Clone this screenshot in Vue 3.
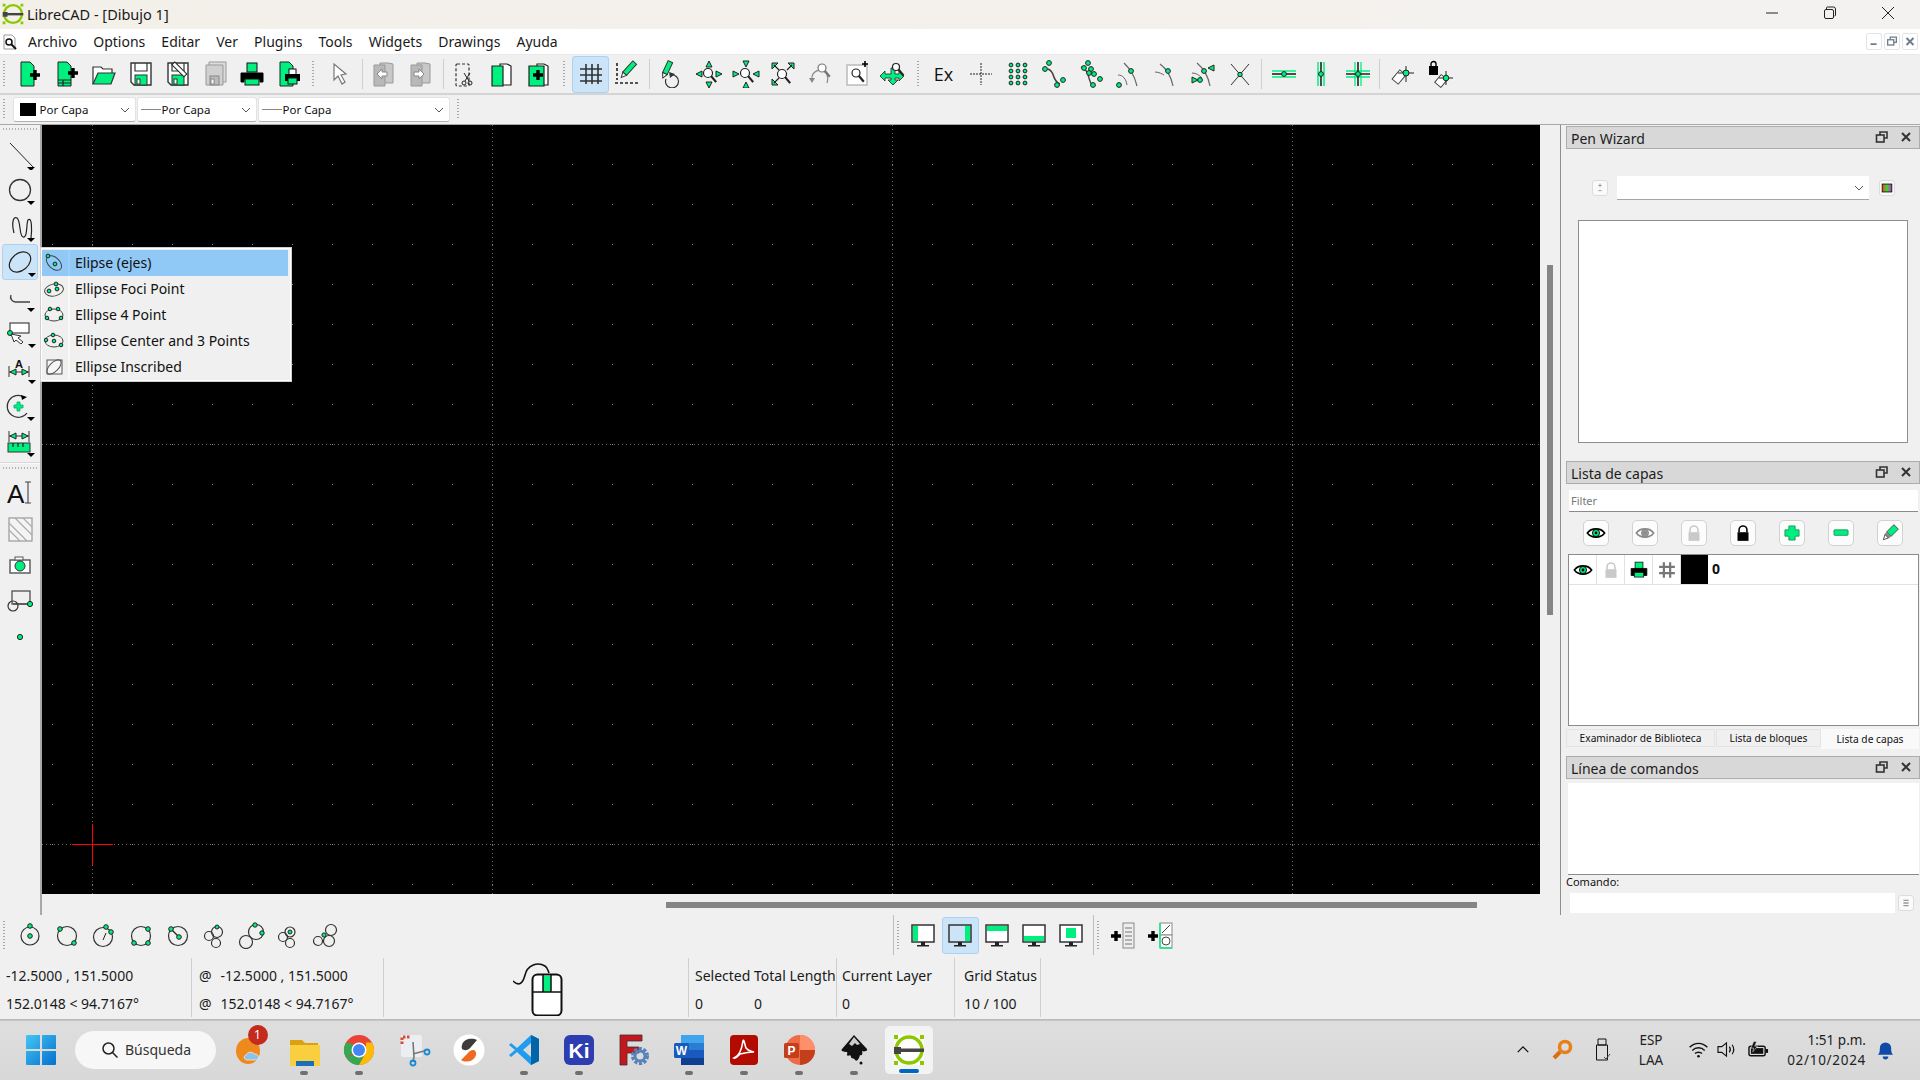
<script setup>
const G = '#00f080';
const dot = (x, y, r = 2.4) => `<circle cx="${x}" cy="${y}" r="${r}" fill="${G}" stroke="#222" stroke-width="1"/>`;
const ln = (d, c = '#222', w = 1.2) => `<path d="${d}" fill="none" stroke="${c}" stroke-width="${w}"/>`;
const fl = (d, f, s = '#222', w = 1) => `<path d="${d}" fill="${f}" stroke="${s}" stroke-width="${w}"/>`;
const circ = (x, y, r, s = '#222', w = 1.2, f = 'none') => `<circle cx="${x}" cy="${y}" r="${r}" fill="${f}" stroke="${s}" stroke-width="${w}"/>`;
const ell = (x, y, rx, ry, rot = 0, s = '#333', w = 1.2) => `<ellipse cx="${x}" cy="${y}" rx="${rx}" ry="${ry}" transform="rotate(${rot} ${x} ${y})" fill="none" stroke="${s}" stroke-width="${w}"/>`;
const rc = (x, y, w, h, f, s = 'none', sw = 1) => `<rect x="${x}" y="${y}" width="${w}" height="${h}" fill="${f}" stroke="${s}" stroke-width="${sw}"/>`;
const plus = (x, y, s = 5, w = 3) => ln(`M${x - s} ${y}h${2 * s}M${x} ${y - s}v${2 * s}`, '#000', w);
const mag = (x, y, r = 4, c = '#222') => circ(x, y, r, c, 1.2, '#fff') + ln(`M${x + r * 0.7} ${y + r * 0.7}l5 6`, c, 2.2);
const tri = (x, y, dir) => {
  const p = { u: `${x - 3},${y + 3} ${x + 3},${y + 3} ${x},${y - 3}`, d: `${x - 3},${y - 3} ${x + 3},${y - 3} ${x},${y + 3}`, l: `${x + 3},${y - 3} ${x + 3},${y + 3} ${x - 3},${y}`, r: `${x - 3},${y - 3} ${x - 3},${y + 3} ${x + 3},${y}` }[dir];
  return `<polygon points="${p}" fill="${G}" stroke="#222" stroke-width="1"/>`;
};
const page = fl('M5 2h9l4 4v20H5z', G);
const floppy = fl('M4 3h20v22H7l-3-3z', '#fff', '#333', 1.4) + rc(8, 15, 12, 10, G, '#333') + rc(10, 19, 3, 5, '#fff', '#333') + ln('M8 3v8h12V3', '#333');
const printer = rc(9, 3, 10, 9, G, '#111') + fl('M3 13h22v9h-3v-3H6v3H3z', '#000', '#000') + rc(7, 19, 14, 6, G, '#111');
const arrowBack = (flip) => fl('M10 3h8l5 1v19H10z', '#c8c8c8', '#999') + fl('M4 5h11v21H4z', '#b8b8b8', '#999') + fl(flip ? 'M17 14l-5-5v3H7v4h5v3z' : 'M7 14l5-5v3h5v4h-5v3z', '#fff', '#888');

const icons = {
  newdoc: page + plus(19, 15, 5, 3.4),
  tpl: page + ln('M5 20h13M5 23h13M10 20v6') + plus(20, 13, 5, 3.4),
  open: fl('M3 24V7h8l2 2h9v4', '#fff', '#333', 1.2) + fl('M3 24l5-11h17l-4 11z', G, '#333', 1.2),
  save: floppy,
  saveas: floppy + `<g transform="translate(15 9) rotate(45)">${rc(-8, -2, 17, 4, '#fff', '#222')}</g>`,
  saveall: fl('M8 2h17v20H8z', '#ddd', '#999') + fl('M5 5h17v20H5z', '#d0d0d0', '#999') + rc(9, 16, 9, 9, '#bbb', '#888') + rc(10, 19, 3, 5, '#fff', '#888'),
  print: printer,
  preview: fl('M5 2h9l4 4v20H5z', G) + rc(14, 9, 7, 6, '#fff', '#111') + rc(10, 14, 15, 7, '#000') + rc(13, 18, 9, 6, G, '#111'),
  select: fl('M8 4l0 16 4-4 4 8 3-2-4-7 5-1z', '#fff', '#777', 1.2),
  undo: arrowBack(false),
  redo: arrowBack(true),
  cut: `<rect x="5" y="4" width="13" height="22" rx="1" fill="none" stroke="#333" stroke-width="1.2" stroke-dasharray="3 2"/>` + ln('M13 13l5 8M19 13l-5 8', '#222', 1) + circ(13, 23, 2, '#222', 1) + circ(19, 23, 2, '#222', 1),
  copy: fl('M12 4h7l4 2v19H12z', '#fff', '#222', 1.2) + fl('M4 6h11l0 20H4z', G, '#222', 1.2),
  paste: fl('M12 4h7l4 2v19H12z', '#fff', '#222', 1.2) + fl('M4 6h11l4 0v20H4z', G, '#222', 1.2) + plus(13, 15, 5, 3.4),
  grid: ln('M9 4v20M15 4v20M21 4v20M3 9h22M3 15h22M3 21h22', '#333', 1.6),
  draft: `<path d="M3 3v17M1 23h24" stroke="#222" stroke-width="1.6" stroke-dasharray="3 2" fill="none"/>` + `<g transform="translate(14 10) rotate(42)">${rc(-2.5, -10, 5, 15, G, '#333')}<polygon points="-2.5,5 2.5,5 0,10" fill="#fff" stroke="#333"/></g>`,
  redraw: `<g transform="translate(9 9) rotate(25)">${rc(-2.5, -8, 5, 13, G, '#333')}<polygon points="-2.5,5 2.5,5 0,10" fill="#fff" stroke="#333"/></g>` + ln('M13 15a6.5 6.5 0 1 1 -5 4', '#333', 1.2) + '<polygon points="11,12 17,14 12,18" fill="#333"/>',
  zoomin: tri(14, 4, 'u') + tri(14, 25, 'd') + tri(4, 14, 'l') + tri(24, 14, 'r') + mag(13, 13, 4.5),
  zoomout: tri(14, 4, 'd') + tri(14, 25, 'u') + tri(4, 14, 'r') + tri(24, 14, 'l') + mag(13, 13, 4.5),
  zoomauto: fl('M3 3h6l-6 6z', G) + fl('M25 3h-6l6 6z', G) + fl('M3 25h6l-6-6z', G) + ln('M5 5l5 5M23 5l-5 5M5 23l5-5') + mag(13, 14, 4.5),
  zoomprev: ln('M6 19a8 8 0 0 1 14-6c2 3 2 7 1 10', '#888', 1.2) + '<polygon points="3,18 9,18 6,23" fill="#888"/>' + mag(16, 8, 4, '#777'),
  zoomwin: rc(4, 5, 20, 20, '#fff', '#bbb', 1.5) + plus(22, 4, 3, 1.6) + mag(13, 13, 4),
  pan: fl('M11 8h4v6h4v-3l5 5-5 5v-3h-4v2h3l-5 5-5-5h3v-2H5v3l-5-5 5-5v3h6z', G, '#333', 0.9) + mag(16, 7, 3.5),
  free: `<path d="M14 3v22M3 14h22" stroke="#222" stroke-width="1" stroke-dasharray="2 1" fill="none"/>`,
  gridpt: [7, 14, 21].map((x) => [5, 11, 17, 23].map((y) => dot(x, y, 1.9)).join('')).join(''),
  end: ln('M7 9c8 3 3 11 12 15', '#444', 1.6) + dot(8, 3) + dot(4, 9) + dot(22, 20) + dot(16, 25),
  oncurve: ln('M3 7c10 4 6 14 12 19', '#444', 1.4) + dot(6, 8) + dot(10, 3) + dot(13, 9) + dot(11, 13) + dot(16, 14) + dot(22, 19) + dot(15, 25),
  center: ln('M9 3c6 6 10 11 13 23', '#666', 1.2) + dot(16, 11) + dot(4, 25) + ln('M3 15c5 0 8 4 9 10', '#666', 1),
  middle: ln('M8 4c7 5 11 12 13 22', '#666', 1.2) + ln('M3 12c4 0 7 2 9 3', '#666', 1) + dot(16, 11),
  dist: ln('M8 3c6 5 11 12 13 23', '#666', 1.2) + ln('M3 13c4 0 7 2 10 5', '#666', 1) + dot(15, 11) + dot(11, 20) + tri(22, 8, 'l') + tri(6, 20, 'r'),
  cross: ln('M5 4l18 21M23 4L5 25', '#333', 1) + dot(14, 14.5, 2.2),
  hrest: ln('M2 11h24M2 17h24', G, 1.5) + ln('M2 14h24', '#222', 1.6) + dot(14, 14, 2.4),
  vrest: ln('M11 2v24M17 2v24', G, 1.5) + ln('M14 2v24', '#222', 1.6) + dot(14, 14, 2.4),
  bothrest: ln('M2 11h24M2 17h24M11 2v24M17 2v24', G, 1.3) + ln('M2 14h24M14 2v24', '#222', 1.6) + dot(14, 14, 2.4),
  relzero: `<g transform="translate(11 17) rotate(40)">${rc(-4, -6, 8, 12, '#fff', '#444')}</g>` + ln('M18 6v16M10 13h16', '#222', 1) + dot(18, 13, 3),
  lockzero: rc(4, 6, 9, 9, '#000') + ln('M6 6V4a2.5 2.5 0 0 1 5 0v2', '#000', 1.4) + `<g transform="translate(16 21) rotate(40)">${rc(-4, -5, 8, 10, '#fff', '#444')}</g>` + ln('M21 11v14M14 18h14', '#222', 1) + dot(21, 18, 2.8),

  lLine: ln('M4 3l24 25', '#222', 1) + '<polygon points="21,27 29,27 25,31" fill="#000"/>',
  lCircle: circ(14, 14, 10.5, '#333', 1.3) + '<polygon points="21,25 29,25 25,29" fill="#000"/>',
  lSpline: ln('M8 21C5 9 8 4 11 6c4 3 2 18 6 19 5 1 3-14 5-17 4-4 4 10 3 18', '#222', 1.2) + '<polygon points="21,26 29,26 25,30" fill="#000"/>',
  lEllipse: ell(14, 14, 12, 8.5, -40, '#222', 1.2) + '<polygon points="22,25 30,25 26,29" fill="#000"/>',
  lPoly: ln('M5 11a5 5 0 0 0 5 7h14', '#444', 1.4) + '<polygon points="21,24 29,24 25,28" fill="#000"/>',
  lSelect: rc(4, 3, 19, 10, '#fff', '#444', 1.2) + dot(4, 13, 2.5) + fl('M5 14l3 8 2-2 5 4 2-2-5-4 3-2z', '#fff', '#333') + '<polygon points="22,24 30,24 26,28" fill="#000"/>',
  lDim: ln('M3 10v11M23 10v11M3 16h20', '#333', 1) + tri(7, 16, 'l') + tri(19, 16, 'r') + `<text x="13" y="12" font-size="11" font-weight="700" text-anchor="middle" font-family="Liberation Sans" fill="#111">A</text>` + '<polygon points="22,24 30,24 26,28" fill="#000"/>',
  lModify: ln('M21 21A11 11 0 1 1 18 5', '#333', 1.2) + '<polygon points="15,3 21,5 16,8" fill="#000"/>' + fl('M11 10h3v3h3v3h-3v3h-3v-3H8v-3h3z', G, '#0a7', 0.8) + '<polygon points="21,25 29,25 25,29" fill="#000"/>',
  lMeasure: ln('M3 3v11M23 3v11M3 8h20', '#333', 1) + tri(7, 8, 'l') + tri(19, 8, 'r') + rc(2, 15, 22, 9, G, '#333') + ln('M7 15v4M12 15v4M17 15v4', '#222', 1.2) + '<polygon points="21,25 29,25 25,29" fill="#000"/>',
  lText: `<text x="1" y="24" font-size="26" font-family="Liberation Sans" fill="#111">A</text>` + ln('M19 3h6M22 3v21M19 24h6', '#444', 1.1),
  lHatch: rc(3, 3, 23, 23, '#f4f4f4', '#999', 1.2) + ln('M3 8l18 18M3 15l11 11M9 3l17 17M17 3l9 9', '#aaa', 1.1),
  lImage: rc(4, 9, 20, 13, '#fff', '#555', 1.4) + rc(9, 6, 8, 3, '#fff', '#555') + circ(14, 15, 5, '#333', 1, G),
  lInsert: rc(6, 4, 18, 13, 'none', '#444', 1.2) + circ(7, 19, 5, '#333', 1.2) + ln('M7 17h17', '#444') + dot(24, 17, 2.6),
  lPoint: dot(14, 14, 2.6),

  mAxes: ell(10, 10, 9, 5.5, 42, '#444', 1) + dot(4, 3, 1.9) + dot(11, 11, 1.9),
  mFoci: ell(10, 11, 9.5, 6, -12, '#444', 1) + dot(5, 12, 1.9) + dot(12, 5, 1.9) + dot(13, 10, 1.9),
  m4: ell(10, 10, 9, 6, 0, '#444', 1) + dot(6, 4, 1.8) + dot(14, 4, 1.8) + dot(3, 13, 1.8) + dot(17, 13, 1.8),
  mC3: ell(10, 10, 9, 6, 0, '#444', 1) + dot(9, 4, 1.8) + dot(2, 9, 1.8) + dot(10, 10, 1.8) + dot(17, 14, 1.8),
  mIn: rc(3, 3, 15, 14, '#f6f6f6', '#555', 1) + ell(10, 10, 9, 4.5, -45, '#555', 1),

  cCR: circ(14, 15, 9, '#333') + dot(14, 15, 2.3) + dot(14, 5, 2.3),
  c2P: circ(14, 15, 9.5, '#333') + dot(7, 8, 2.3) + dot(21, 22, 2.3),
  c2PR: circ(13, 16, 9.5, '#333') + fl('M13 19l3-7', 'none') + dot(16, 6, 2.3) + dot(21, 11, 2.3),
  c3P: circ(14, 15, 9.5, '#333') + dot(21, 8, 2.3) + dot(7, 22, 2.3) + dot(21, 22, 2.3),
  cCP: circ(14, 15, 9.5, '#333') + ln('M7 8l8 8') + dot(7, 8, 2.3) + dot(15, 16, 2.3),
  cT1: circ(8, 15, 4.5, '#333') + circ(15, 22, 4.5, '#333') + circ(16, 11, 5.5, '#333') + dot(16, 6, 2),
  cT2: circ(8, 21, 6.5, '#333') + circ(18, 11, 7.5, '#333') + dot(17, 4, 2.2) + dot(24, 12, 2.2),
  cT3: circ(8, 16, 4.5, '#333') + circ(15, 22, 4.5, '#333') + circ(15, 11, 5, '#333') + dot(15, 11, 2),
  cT4: circ(6, 20, 4.5, '#333') + circ(17, 20, 5.5, '#333') + circ(19, 9, 5.5, '#333') + dot(12, 14, 2.1),

  scL: rc(3, 4, 22, 17, '#fff', '#333', 1.5) + rc(4, 5, 5, 15, G) + rc(12, 21, 4, 3, '#222') + rc(8, 24, 12, 1.5, '#222'),
  scR: rc(3, 4, 22, 17, '#fff0', '#333', 1.5) + rc(19, 5, 5, 15, G) + rc(12, 21, 4, 3, '#222') + rc(8, 24, 12, 1.5, '#222'),
  scT: rc(3, 4, 22, 17, '#fff', '#333', 1.5) + rc(4, 5, 20, 5, G) + rc(12, 21, 4, 3, '#222') + rc(8, 24, 12, 1.5, '#222'),
  scB: rc(3, 4, 22, 17, '#fff', '#333', 1.5) + rc(4, 15, 20, 5, G) + rc(12, 21, 4, 3, '#222') + rc(8, 24, 12, 1.5, '#222'),
  scF: rc(3, 4, 22, 17, '#fff', '#333', 1.5) + rc(9, 7, 10, 10, G) + rc(12, 21, 4, 3, '#222') + rc(8, 24, 12, 1.5, '#222'),
  addList: plus(7, 15, 5, 3.4) + rc(14, 2, 11, 25, '#eee', '#888') + ln('M16 7h7M16 11h7M16 15h7M16 19h7M16 23h7', '#777', 1),
  addTool: plus(7, 15, 5, 3.4) + rc(14, 2, 12, 12, '#fff', '#888') + ln('M16 12l8-8', '#444', 1) + rc(14, 14, 12, 13, '#fff', '#888') + circ(20, 20, 4, '#444', 1) + ln('M14 2v25', G, 1.4) + ln('M14 27h12', G, 1.4),
};

const mainTools = ['g1', 'newdoc', 'tpl', 'open', 'save', 'saveas', 'saveall', 'print', 'preview', 'g2', 'select', '|', 'undo', 'redo', '|', 'cut', 'copy', 'paste', 'g3', 'grid', 'draft', '|', 'redraw', 'zoomin', 'zoomout', 'zoomauto', 'zoomprev', 'zoomwin', 'pan', 'g4', 'ex', 'free', 'gridpt', 'end', 'oncurve', 'center', 'middle', 'dist', 'cross', '|', 'hrest', 'vrest', 'bothrest', '|', 'relzero', 'lockzero'];
const leftTop = ['lLine', 'lCircle', 'lSpline', 'lEllipse', 'lPoly', 'lSelect', 'lDim', 'lModify', 'lMeasure'];
const leftBottom = ['lText', 'lHatch', 'lImage', 'lInsert', 'lPoint'];
const circleTools = ['cCR', 'c2P', 'c2PR', 'c3P', 'cCP', 'cT1', 'cT2', 'cT3', 'cT4'];
const screenTools = ['scL', 'scR', 'scT', 'scB', 'scF'];
const menus = ['Archivo', 'Options', 'Editar', 'Ver', 'Plugins', 'Tools', 'Widgets', 'Drawings', 'Ayuda'];
const combos = [
  { label: 'Por Capa', kind: 'color', w: 'c1' },
  { label: 'Por Capa', kind: 'line', w: 'c2' },
  { label: 'Por Capa', kind: 'line', w: 'c3' },
];
const popup = [
  { icon: 'mAxes', label: 'Elipse (ejes)', active: true },
  { icon: 'mFoci', label: 'Ellipse Foci Point' },
  { icon: 'm4', label: 'Ellipse 4 Point' },
  { icon: 'mC3', label: 'Ellipse Center and 3 Points' },
  { icon: 'mIn', label: 'Ellipse Inscribed' },
];

const eye = (c = '#000', o = G) => `<path d="M3 14c5-7 17-7 22 0c-5 7-17 7-22 0z" fill="#fff" stroke="${c}" stroke-width="2"/><circle cx="14" cy="14" r="4.5" fill="${o}" stroke="${c}" stroke-width="1.2"/><circle cx="14" cy="14" r="1.8" fill="${c}"/>`;
const lock = (c) => `<path d="M9 13V10a5 5 0 0 1 10 0v3" fill="none" stroke="${c}" stroke-width="2"/><rect x="7" y="13" width="14" height="11" fill="${c}"/>`;
const layerBtns = [
  eye(),
  eye('#888', '#999'),
  lock('#c9c9c9'),
  lock('#000'),
  fl('M10 5h8v5h5v8h-5v5h-8v-5H5v-8h5z', G, '#0a8a50', 1),
  `<rect x="5" y="10" width="18" height="7" rx="1" fill="${G}" stroke="#0a8a50"/>`,
  `<g transform="rotate(45 14 14)"><rect x="10" y="3" width="8" height="13" fill="${G}" stroke="#333"/><rect x="10" y="16" width="8" height="4" fill="#888"/><path d="M11 20h6l-3 6z" fill="#fff" stroke="#333"/></g>`,
];
const layerRow = [
  eye(),
  lock('#c9c9c9'),
  rc(9, 4, 10, 8, G, '#111') + fl('M4 12h20v9H4z', '#000', '#000') + rc(8, 17, 12, 6, G, '#111'),
  ln('M10 4v20M18 4v20M4 10h20M4 18h20', '#777', 2.8),
];
const rowClass = ['c-eye', 'c-lock', 'c-print', 'c-grid'];

const TB = '#d9d9d9';
const logoMark = `<path d="M1 1h4v4H1zM27 1h4v4h-4zM1 27h4v4H1zM27 27h4v4h-4z" fill="#8cc800"/><circle cx="16" cy="16" r="13" fill="none" stroke="#8cc800" stroke-width="3.400"/><rect x="1" y="13" width="7" height="7" fill="#444"/><rect x="5" y="14.500" width="26" height="3.500" fill="#444"/>`;
const apps = [
  { c: 'weather', svg: `<ellipse cx="15" cy="17" rx="12" ry="13" fill="#ee8a1d"/><path d="M14 26c-3 0-4-4-1-5 1-3 7-4 8-1 4-1 7 5 2 6z" fill="#8fc1ea" stroke="#fff" stroke-width=".6"/>` },
  { c: 'folder', line: 1, svg: `<path d="M2 6h12l3 3h13v6H2z" fill="#dca010"/><path d="M2 11h30v21H2z" fill="#f9cf3f"/><path d="M8 27h18v5H8z" fill="#1970b8"/>` },
  { c: 'chrome', line: 1, svg: `<circle cx="16" cy="16" r="15" fill="#ea4335"/><path d="M16 16L3 23.5A15 15 0 0 1 3 8.5L9 10z" fill="#34a853"/><path d="M3 23A15 15 0 0 0 16 31l7-14z" fill="#34a853"/><path d="M29 8.5A15 15 0 0 1 16 31l7-13 0-9.500z" fill="#fbbc05"/><circle cx="16" cy="16" r="7.500" fill="#fff"/><circle cx="16" cy="16" r="6" fill="#4285f4"/>` },
  { c: 'snip', svg: `<rect x="3" y="1" width="21" height="22" rx="2" fill="#eceff2"/><path d="M4 10V3h8" fill="none" stroke="#d94a33" stroke-width="3" stroke-dasharray="2.500 1.500"/><path d="M15 8l1 15 -1 5M15 20l11-3" fill="none" stroke="#777" stroke-width="1.600"/><circle cx="15" cy="29" r="2.500" fill="none" stroke="#1b8ad6" stroke-width="1.800"/><circle cx="29" cy="18" r="2.500" fill="none" stroke="#1b8ad6" stroke-width="1.800"/>` },
  { c: 'slack', svg: `<circle cx="16" cy="16" r="15.500" fill="#fff"/><path d="M24 6c-4-2-13-2-15 5-2 6 5 7 9 2z" fill="#3c3c3c"/><path d="M8 26c4 3 13 2 15-5 1-5-4-7-8-2z" fill="#ee6a21"/>` },
  { c: 'vscode', line: 1, svg: `<path d="M23 1l8 4v22l-8 4L9 18 3 23l-2-2 6-5-6-5 2-2 6 5z" fill="#1f9cf0"/><path d="M23 1v30l8-4V5z" fill="#0065a9"/><path d="M23 9l-8 7 8 7z" fill="${TB}"/>` },
  { c: 'ki', line: 1, svg: `<rect x="1" y="1" width="30" height="30" rx="6" fill="#2d3eb0"/><text x="16" y="24" text-anchor="middle" font-family="Liberation Sans" font-weight="700" font-size="21" fill="#fff">Ki</text>` },
  { c: 'fgear', svg: `<path d="M2 1h22v6H9v6h12v6H9v12H2z" fill="#c4161c" stroke="#333" stroke-width=".8"/><circle cx="22" cy="22" r="7" fill="none" stroke="#5683b9" stroke-width="4" stroke-dasharray="3 1.500"/><circle cx="22" cy="22" r="5" fill="none" stroke="#5683b9" stroke-width="3"/>` },
  { c: 'word', line: 1, svg: `<rect x="8" y="1" width="23" height="30" rx="2" fill="#2b7cd3"/><rect x="8" y="1" width="23" height="8" fill="#41a5ee"/><rect x="8" y="16" width="23" height="8" fill="#185abd"/><rect x="8" y="24" width="23" height="7" fill="#103f91"/><rect x="1" y="9" width="15" height="15" rx="1.500" fill="#185abd"/><text x="8.500" y="21" text-anchor="middle" font-family="Liberation Sans" font-weight="700" font-size="12" fill="#fff">W</text>` },
  { c: 'acrobat', line: 1, svg: `<rect x="2" y="1" width="28" height="30" rx="4" fill="#b30b00"/><path d="M6 24c5-2 8-10 9-17 1-3 2 5 3 7 2 3 5 3 8 4-5 0-10 1-14 2-2 2-4 5-6 4z" fill="none" stroke="#fff" stroke-width="1.600"/>` },
  { c: 'ppt', line: 1, svg: `<circle cx="17" cy="16" r="15" fill="#ed6c47"/><path d="M17 16h15a15 15 0 0 1-15 15z" fill="#c43e1c"/><path d="M17 1a15 15 0 0 1 15 15H17z" fill="#ff8f6b"/><rect x="1" y="9" width="15" height="15" rx="1.500" fill="#c43e1c"/><text x="8.500" y="21" text-anchor="middle" font-family="Liberation Sans" font-weight="700" font-size="12" fill="#fff">P</text>` },
  { c: 'inkscape', line: 1, svg: `<path d="M16 1L29 15c1 2-3 3-5 2 1 3 0 5-2 4-1 4-3 7-5 5 0-2-4-1-4-3 0-2-2-2-3-1-2-1 0-3-1-4-3 0-7-1-5-3z" fill="#111"/><path d="M16 3l6 7-3 1-2-2-3 3-3-2z" fill="#ccc"/><circle cx="23" cy="29" r="1.500" fill="#111"/>` },
  { c: 'librecad', active: true, svg: `<rect x="1" y="1" width="30" height="30" fill="#fff"/>` + logoMark },
];
</script>

<template>
  <div class="app">
    <header class="titlebar">
      <svg class="logo" viewBox="0 0 32 32" v-html="logoMark"></svg>
      <span class="title-text">LibreCAD - [Dibujo 1]</span>
      <div class="winctl">
        <svg viewBox="0 0 14 14" class="wc"><path d="M1 7h12" stroke="#222" fill="none" /></svg>
        <svg viewBox="0 0 14 14" class="wc"><path d="M3.500 3V2a1 1 0 0 1 1-1h6a2 2 0 0 1 2 2v6a1 1 0 0 1-1 1" stroke="#222" fill="none"/><rect x="1.500" y="3.500" width="9" height="9" rx="1.500" stroke="#222" fill="none"/></svg>
        <svg viewBox="0 0 14 14" class="wc"><path d="M1 1l12 12M13 1L1 13" stroke="#222" fill="none"/></svg>
      </div>
    </header>

    <nav class="menubar">
      <svg class="doc-ico" viewBox="0 0 18 18"><path d="M3 2h8l3 3v11H3z" fill="#fff" stroke="#999"/><circle cx="8" cy="9" r="3" fill="#fff" stroke="#111" stroke-width="1.500"/><path d="M10 11l5 5" stroke="#111" stroke-width="2"/></svg>
      <span v-for="m in menus" :key="m" class="menu-item">{{ m }}</span>
      <div class="mdi">
        <span class="mdi-btn"><svg viewBox="0 0 16 16"><path d="M4 11h7" stroke="#6e7c8c" stroke-width="2"/></svg></span>
        <span class="mdi-btn"><svg viewBox="0 0 16 16"><path d="M6 5V3h7v6h-3" fill="none" stroke="#6e7c8c" stroke-width="1.500"/><rect x="3" y="6" width="7" height="6" fill="none" stroke="#6e7c8c" stroke-width="1.500"/></svg></span>
        <span class="mdi-btn"><svg viewBox="0 0 16 16"><path d="M4 4l8 8M12 4l-8 8" stroke="#6e7c8c" stroke-width="2.200"/></svg></span>
      </div>
    </nav>

    <div class="toolbar tb-main">
      <template v-for="(t, i) in mainTools" :key="i">
        <span v-if="t === '|'" class="sep"></span>
        <span v-else-if="t[0] === 'g' && t.length === 2" class="grip" :class="t"></span>
        <span v-else-if="t === 'ex'" class="tbtn ex">Ex</span>
        <span v-else class="tbtn" :class="{ on: t === 'grid' }"><svg class="ic" viewBox="0 0 28 28" v-html="icons[t]"></svg></span>
      </template>
    </div>

    <div class="toolbar tb-pen">
      <span class="grip g1"></span>
      <div v-for="(c, i) in combos" :key="i" class="combo" :class="c.w">
        <span v-if="c.kind === 'color'" class="swatch"></span>
        <span v-else class="dash"></span>
        <span class="combo-text">{{ c.label }}</span>
        <svg class="chev" viewBox="0 0 10 6"><path d="M1 1l4 4 4-4" fill="none" stroke="#555" /></svg>
      </div>
      <span class="grip g5"></span>
    </div>

    <main class="workspace">
      <aside class="lefttools">
        <span class="hgrip"></span>
        <span v-for="t in leftTop" :key="t" class="lbtn" :class="{ on: t === 'lEllipse' }"><svg class="lic" viewBox="-2 -2 32 32" v-html="icons[t]"></svg></span>
        <span class="lsep"></span>
        <span class="hgrip"></span>
        <span v-for="t in leftBottom" :key="t" class="lbtn"><svg class="lic" viewBox="-2 -2 32 32" v-html="icons[t]"></svg></span>
      </aside>

      <section class="center">
        <div class="center-top">
          <svg class="canvas" viewBox="0 0 1498 769" width="1498" height="769">
            <defs>
              <pattern id="griddots" x="10" y="39" width="40" height="40" patternUnits="userSpaceOnUse">
                <rect x="0" y="0" width="1" height="1" fill="#8a8a8a" />
              </pattern>
            </defs>
            <rect width="1498" height="769" fill="#000" />
            <rect width="1498" height="769" fill="url(#griddots)" />
            <g stroke="#6a6a6a" stroke-dasharray="1 3" fill="none">
              <path d="M50.500 0V769M450.500 0V769M850.500 0V769M1250.500 0V769" />
              <path d="M0 319.500H1498M0 719.500H1498" />
            </g>
            <path d="M30 719.500H71M50.500 699V740" stroke="#f00" fill="none" />
          </svg>
          <div class="vscroll"><span class="vthumb"></span></div>
        </div>
        <div class="hscroll"><span class="hthumb"></span></div>
      </section>

      <aside class="docks">
        <section class="dock d-pen">
          <div class="dock-title"><span>Pen Wizard</span><svg class="dt" viewBox="0 0 36 16"><path d="M6 5V2h7v6h-3" fill="none" stroke="#333" stroke-width="1.600"/><rect x="2.500" y="5" width="7.500" height="7" fill="none" stroke="#333" stroke-width="1.600"/><path d="M28 3l8 8M36 3l-8 8" stroke="#333" stroke-width="2"/></svg></div>
          <div class="pen-row">
            <span class="mini"><svg viewBox="0 0 16 16"><path d="M8 3v4M6 5h4M6 11h4" stroke="#999"/></svg></span>
            <div class="pen-combo"><svg class="chev" viewBox="0 0 10 6"><path d="M1 1l4 4 4-4" fill="none" stroke="#555" /></svg></div>
            <span class="mini"><svg viewBox="0 0 16 16"><defs><linearGradient id="rb" x1="0" x2="1"><stop offset="0" stop-color="#ff3b20"/><stop offset=".5" stop-color="#30e030"/><stop offset="1" stop-color="#d020e0"/></linearGradient></defs><rect x="2.500" y="3.500" width="11" height="9" fill="url(#rb)" stroke="#111"/></svg></span>
          </div>
          <div class="pen-preview"></div>
        </section>

        <section class="dock d-layers">
          <div class="dock-title"><span>Lista de capas</span><svg class="dt" viewBox="0 0 36 16"><path d="M6 5V2h7v6h-3" fill="none" stroke="#333" stroke-width="1.600"/><rect x="2.500" y="5" width="7.500" height="7" fill="none" stroke="#333" stroke-width="1.600"/><path d="M28 3l8 8M36 3l-8 8" stroke="#333" stroke-width="2"/></svg></div>
          <div class="filter">Filter</div>
          <div class="layer-btns">
            <span v-for="(b, i) in layerBtns" :key="i" class="lay-btn"><svg viewBox="0 0 28 28" v-html="b"></svg></span>
          </div>
          <div class="layer-table">
            <div class="layer-row">
              <span v-for="(b, i) in layerRow" :key="i" class="cell" :class="rowClass[i]"><svg viewBox="0 0 28 28" v-html="b"></svg></span>
              <span class="cell-color"></span>
              <span class="layer-name">0</span>
            </div>
          </div>
          <div class="tabs">
            <span class="tab t1">Examinador de Biblioteca</span>
            <span class="tab t2">Lista de bloques</span>
            <span class="tab t3 active">Lista de capas</span>
          </div>
        </section>

        <section class="dock d-cmd">
          <div class="dock-title"><span>Línea de comandos</span><svg class="dt" viewBox="0 0 36 16"><path d="M6 5V2h7v6h-3" fill="none" stroke="#333" stroke-width="1.600"/><rect x="2.500" y="5" width="7.500" height="7" fill="none" stroke="#333" stroke-width="1.600"/><path d="M28 3l8 8M36 3l-8 8" stroke="#333" stroke-width="2"/></svg></div>
          <div class="cmd-out"></div>
          <div class="cmd-label">Comando:</div>
          <div class="cmd-row">
            <div class="cmd-in"></div>
            <span class="mini small"><svg viewBox="0 0 16 16"><path d="M5 5h6M5 8h6M5 11h6" stroke="#999" stroke-width="1.500"/></svg></span>
          </div>
        </section>
      </aside>

      <div class="popup">
        <div v-for="p in popup" :key="p.label" class="pop-item" :class="{ active: p.active }">
          <span class="pop-ico"><svg viewBox="0 0 20 20" v-html="icons[p.icon]"></svg></span>
          <span class="pop-label">{{ p.label }}</span>
        </div>
      </div>
    </main>

    <div class="bottomtools">
      <div class="bt-left">
        <span class="grip g1"></span>
        <span v-for="t in circleTools" :key="t" class="tbtn"><svg class="ic" viewBox="0 0 28 28" v-html="icons[t]"></svg></span>
      </div>
      <div class="bt-screen">
        <span class="grip g6"></span>
        <span v-for="t in screenTools" :key="t" class="tbtn" :class="{ on: t === 'scR' }"><svg class="ic" viewBox="0 0 28 28" v-html="icons[t]"></svg></span>
      </div>
      <div class="bt-add">
        <span class="grip g6"></span>
        <span class="tbtn"><svg class="ic" viewBox="0 0 28 28" v-html="icons.addList"></svg></span>
        <span class="tbtn"><svg class="ic" viewBox="0 0 28 28" v-html="icons.addTool"></svg></span>
      </div>
    </div>

    <footer class="statusbar">
      <div class="st st1"><span>-12.5000 , 151.5000</span><span>152.0148 &lt; 94.7167°</span></div>
      <div class="st st2">
        <div class="at-row"><span class="at">@</span><span>-12.5000 , 151.5000</span></div>
        <div class="at-row"><span class="at">@</span><span>152.0148 &lt; 94.7167°</span></div>
      </div>
      <div class="st st3">
        <svg class="mouse" viewBox="0 0 50 54">
          <path d="M0 19c6 6 10 2 12-6 2-9 12-14 20-9 3 2 3 5 4 7" fill="none" stroke="#111" stroke-width="1.600"/>
          <rect x="19.500" y="12.500" width="29" height="41" rx="5" fill="#fff" stroke="#111" stroke-width="2"/>
          <rect x="30" y="14" width="8" height="16" fill="#00f080"/>
          <path d="M20 30h28M30 13v17M38 13v17" stroke="#111" stroke-width="1.500" fill="none"/>
        </svg>
      </div>
      <div class="st st4">
        <div class="pair"><span>Selected</span><span>0</span></div>
        <div class="pair"><span>Total Length</span><span>0</span></div>
      </div>
      <div class="st st5"><span>Current Layer</span><span>0</span></div>
      <div class="st st6"><span>Grid Status</span><span>10 / 100</span></div>
    </footer>

    <div class="taskbar">
      <span class="start">
        <svg viewBox="0 0 30 30"><defs><linearGradient id="win" x1="0" y1="0" x2="1" y2="1"><stop offset="0" stop-color="#43c6f5"/><stop offset="1" stop-color="#0570cc"/></linearGradient></defs><path d="M0 1a1 1 0 0 1 1-1h13v14H0zM16 0h13a1 1 0 0 1 1 1v13H16zM0 16h14v14H1a1 1 0 0 1-1-1zM16 16h14v13a1 1 0 0 1-1 1H16z" fill="url(#win)"/></svg>
      </span>
      <div class="search">
        <svg viewBox="0 0 18 18"><circle cx="7.500" cy="7.500" r="5.500" fill="none" stroke="#222" stroke-width="1.500"/><path d="M11.500 11.500l5 5" stroke="#222" stroke-width="1.500"/></svg>
        <span>Búsqueda</span>
      </div>
      <div class="apps">
        <span v-for="a in apps" :key="a.c" class="app-ico" :class="{ cur: a.active }">
          <svg viewBox="0 0 32 32" v-html="a.svg"></svg>
          <b v-if="a.c === 'weather'" class="badge">1</b>
          <i v-if="a.line || a.active" class="pip"></i>
        </span>
      </div>
      <div class="tray">
        <span class="tr tr1"><svg viewBox="0 0 16 10"><path d="M2 8l6-6 6 6" fill="none" stroke="#111" stroke-width="1.500"/></svg></span>
        <span class="tr tr2"><svg viewBox="0 0 22 22"><circle cx="13" cy="8" r="5.500" fill="none" stroke="#e8801a" stroke-width="3.500"/><path d="M8 13l-6 6" stroke="#d96f10" stroke-width="4"/></svg></span>
        <span class="tr tr3"><svg viewBox="0 0 16 24"><path d="M3 1h8v6H3z" fill="none" stroke="#111"/><path d="M1.500 7h11v15h-11z" fill="none" stroke="#111"/><path d="M9 19l2 2 4-5" fill="none" stroke="#444"/></svg></span>
        <span class="lang"><span>ESP</span><span>LAA</span></span>
        <span class="tr tr4"><svg viewBox="0 0 22 18"><path d="M1 6c6-6 14-6 20 0M4 9.500c4-4 10-4 14 0M7 13c2-2 6-2 8 0" fill="none" stroke="#111" stroke-width="1.500"/><circle cx="11" cy="16" r="1.500" fill="#111"/></svg></span>
        <span class="tr tr5"><svg viewBox="0 0 20 18"><path d="M1 6h4l5-4v14l-5-4H1z" fill="none" stroke="#111" stroke-width="1.200"/><path d="M13 6c1.500 2 1.500 4 0 6M16 4c2 3 2 7 0 10" fill="none" stroke="#111" stroke-width="1.200"/></svg></span>
        <span class="tr tr6"><svg viewBox="0 0 22 18"><rect x="1" y="5" width="17" height="10" rx="2" fill="none" stroke="#111" stroke-width="1.500"/><rect x="3" y="7" width="13" height="6" fill="#111"/><rect x="18.500" y="8" width="2.500" height="4" fill="#111"/><path d="M6 0L3 7h3l-1 4 5-6H7l2-5z" fill="#111" stroke="#ddd" stroke-width=".6"/></svg></span>
        <span class="clock"><span>1:51 p.m.</span><span class="date">02/10/2024</span></span>
        <span class="tr tr7"><svg viewBox="0 0 18 20"><path d="M1 15c2-2 2-4 2-7a6 6 0 0 1 12 0c0 3 0 5 2 7z" fill="#0f4aa8"/><path d="M6 17h6a3 3 0 0 1-6 0z" fill="#0f4aa8"/></svg></span>
      </div>
    </div>
  </div>
</template>

<style>
html, body { margin: 0; padding: 0; background: #f0f0f0; }
</style>

<style scoped>
.app {
  width: 1920px; height: 1080px; overflow: hidden; position: relative;
  display: flex; flex-direction: column; background: #f0f0f0; color: #111;
  font-family: "Noto Sans", "Open Sans", sans-serif; font-size: 14px;
}
.titlebar { height: 29px; flex: none; display: flex; align-items: center; padding-bottom: 2px; box-sizing: border-box; background: linear-gradient(90deg, #f3efe9, #f4f1ed 70%, #f3f2f1 80%); }
.logo { width: 22px; height: 22px; margin-left: 2px; margin-top: 1px; }
.title-text { margin-left: 3px; font-size: 14.500px; color: #1a1a1a; }
.winctl { margin-left: auto; display: flex; gap: 44px; padding-right: 25px; margin-top: -1px; }
.wc { width: 14px; height: 14px; }
.menubar { height: 26px; flex: none; background: #fff; border-bottom: 1px solid #e9e9e9; box-sizing: border-box; display: flex; align-items: center; gap: 16.100px; font-size: 14px; position: relative; }
.doc-ico { width: 18px; height: 18px; margin: 0 -7px 0 1px; }
.menu-item { color: #1a1a1a; }
.mdi { margin-left: auto; display: flex; gap: 2px; padding-right: 2px; }
.mdi-btn { width: 16px; height: 17px; border: 1px solid #e4e4e4; box-sizing: border-box; border-radius: 2px; display: flex; }
.mdi-btn svg { width: 14px; height: 15px; }
.toolbar { display: flex; align-items: center; flex: none; box-sizing: border-box; }
.tb-main { height: 40px; border-bottom: 2px solid #d4d4d4; }
.tb-pen { height: 30px; padding-bottom: 1px; border-bottom: 1px solid #a8a8a8; }
.grip {
  flex: none; height: 70%; align-self: center;
  background-image: repeating-linear-gradient(#a8a8a8 0 1px, transparent 1px 3px);
  background-size: 2px 100%; background-repeat: no-repeat; background-position: 3px center;
}
.g1 { width: 11.500px; }
.g2 { width: 14px; background-position: 4px center; }
.g3 { width: 14.500px; background-position: 5px center; }
.g4 { width: 13px; background-position: 5px center; }
.g5 { width: 12px; margin-left: 3px; background-position: 3px center; }
.g6 { width: 11px; background-position: 3px center; }
.sep { width: 7px; height: 30px; flex: none; background: linear-gradient(#cfcfcf, #cfcfcf) center / 1px 100% no-repeat; }
.tbtn { width: 37px; height: 37px; flex: none; display: flex; align-items: center; justify-content: center; box-sizing: border-box; border-radius: 3px; border: 1px solid transparent; }
.tbtn.on { background: #cce4f7; border-color: #a9d2f5; }
.ic { width: 28px; height: 28px; }
.ex { font-size: 18px; font-family: "Open Sans", sans-serif; color: #111; }
.combo { height: 25px; background: #fff; border-radius: 3px; border: 1px solid #e3e3e3; border-bottom-color: #b0b0b0; box-sizing: border-box; display: flex; align-items: center; position: relative; font-size: 11.500px; margin-right: 1px; }
.combo-text { padding-top: 1px; }
.c1 { width: 123px; margin-left: 1px; }
.c2 { width: 120px; }
.c3 { width: 192px; }
.swatch { width: 16px; height: 13px; background: #000; margin: 0 4px 0 6px; }
.dash { width: 20px; height: 1px; background: #888; margin: 0 1px 0 3px; }
.chev { position: absolute; right: 5px; top: 9px; width: 10px; height: 6px; }
.workspace { height: 790px; flex: none; display: flex; position: relative; }
.lefttools { width: 42px; flex: none; border-right: 2px solid #a8a8a8; box-sizing: border-box; display: flex; flex-direction: column; align-items: center; padding-top: 3px; }
.hgrip { width: 34px; height: 2px; flex: none; margin-bottom: 6px; background-image: repeating-linear-gradient(90deg, #b0b0b0 0 1px, transparent 1px 3px); }
.lbtn { width: 36px; height: 36px; flex: none; display: flex; align-items: center; justify-content: center; box-sizing: border-box; border: 1px solid transparent; border-radius: 3px; }
.lbtn.on { background: #cce4f7; border-color: #a9d2f5; }
.lic { width: 32px; height: 32px; }
.lsep { width: 40px; height: 2px; background: #fafafa; border-top: 1px solid #d8d8d8; margin: 2px 0 3px; flex: none; box-sizing: border-box; }
.center { width: 1519px; flex: none; display: flex; flex-direction: column; border-right: 1px solid #8e8e8e; box-sizing: border-box; }
.center-top { display: flex; height: 769px; flex: none; }
.canvas { display: block; flex: none; }
.vscroll { flex: 1; display: flex; justify-content: center; padding-top: 140px; }
.vthumb { width: 6px; height: 350px; background: #858585; }
.hscroll { flex: 1; padding: 8px 0 0 624px; }
.hthumb { display: block; width: 811px; height: 6px; background: #858585; }
.docks { flex: 1; display: flex; flex-direction: column; padding-left: 5px; padding-top: 1px; min-width: 0; }
.dock { flex: none; }
.d-pen { height: 335px; }
.d-layers { height: 295px; }
.dock-title { height: 23px; box-sizing: border-box; background: #d8d8d8; border: 1px solid #acacac; display: flex; align-items: center; padding: 2px 0 0 4px; font-size: 14px; color: #1c1c1c; position: relative; }
.dt { width: 36px; height: 16px; position: absolute; right: 9px; top: 3px; overflow: visible; }
.pen-row { display: flex; align-items: center; margin-top: 27px; padding-left: 26px; height: 24px; }
.mini { width: 16px; height: 16px; flex: none; background: #fafafa; border: 1px solid #dcdcdc; border-radius: 3px; box-sizing: border-box; display: flex; }
.mini svg { width: 100%; height: 100%; }
.pen-combo { width: 252px; height: 24px; background: #fff; margin: 0 10px 0 9px; border-bottom: 1px solid #a5a5a5; box-sizing: border-box; position: relative; }
.pen-preview { margin: 20px 0 0 12px; width: 330px; height: 223px; background: #fff; border: 1px solid #8c8c96; box-sizing: border-box; }
.filter { margin: 6px 2px 0 3px; height: 22px; background: #fff; border-bottom: 1px solid #8a8a8a; box-sizing: border-box; font-size: 11px; color: #777; padding: 3px 0 0 2px; }
.layer-btns { display: flex; gap: 23px; margin: 8px 0 0 17px; }
.lay-btn { width: 26px; height: 26px; background: #fcfcfc; border: 1px solid #d2d2d2; border-radius: 5px; box-sizing: border-box; display: flex; align-items: center; justify-content: center; }
.lay-btn svg { width: 22px; height: 22px; }
.layer-table { margin: 8px 1px 0 2px; height: 172px; background: #fff; border: 1px solid #8a8a90; box-sizing: border-box; }
.layer-row { height: 30px; display: flex; border-bottom: 1px solid #e2e2e2; box-sizing: border-box; align-items: stretch; }
.cell { width: 28px; flex: none; border-right: 1px solid #e2e2e2; box-sizing: border-box; display: flex; align-items: center; justify-content: center; }
.cell svg { width: 22px; height: 22px; }
.cell-color { width: 27px; background: #000; flex: none; }
.layer-name { padding-left: 4px; font-weight: 700; font-size: 14px; line-height: 28px; }
.tabs { display: flex; margin-top: 3px; font-size: 10.200px; height: 20px; }
.tab { box-sizing: border-box; height: 18px; background: #f0f0f0; border: 1px solid #e3e3e3; display: flex; align-items: center; justify-content: center; }
.t1 { width: 149px; }
.t2 { width: 105px; margin-left: 1px; }
.t3 { width: 98px; }
.tab.active { height: 20px; background: #f9f9f9; border-color: #f9f9f9; }
.cmd-out { margin: 4px 1px 0 2px; height: 92px; background: #fff; border-bottom: 1px solid #8a8a8a; box-sizing: border-box; }
.cmd-label { font-size: 11px; height: 18px; line-height: 14px; }
.cmd-row { display: flex; align-items: center; margin-left: 4px; height: 20px; }
.cmd-in { width: 325px; height: 20px; background: #fff; }
.mini.small { margin-left: 3px; }
.popup { position: absolute; left: 40px; top: 122px; width: 252px; height: 135px; box-sizing: border-box; background: #f0f0f0; border: 2px solid #fff; outline: 1px solid #d0d0d0; outline-offset: -1px; padding: 1px 2px 0 0; font-size: 14px; }
.pop-item { height: 26px; display: flex; align-items: center; }
.pop-item.active { background: #90c8f6; }
.pop-ico { width: 28px; height: 100%; flex: none; box-sizing: border-box; border-right: 2px solid #f8f8f8; display: flex; align-items: center; padding: 0 0 0 2px; }
.pop-item.active .pop-ico { border-right-color: #9ccef6; }
.pop-ico svg { width: 20px; height: 20px; }
.pop-label { padding: 0 0 2px 5px; color: #111; }
.bottomtools { height: 43px; flex: none; display: flex; align-items: flex-start; position: relative; }
.bt-left { display: flex; align-items: center; height: 40px; }
.bt-screen { display: flex; align-items: center; height: 40px; margin-left: 548px; border-left: 1px solid #bdbdbd; }
.bt-add { display: flex; align-items: center; height: 40px; border-left: 1px solid #bdbdbd; margin-left: 3px; }
.statusbar { height: 62px; flex: none; display: flex; border-bottom: 1px solid #bbb; box-sizing: border-box; font-size: 14px; padding-bottom: 2px; }
.st { box-sizing: border-box; border-right: 1px solid #cfcfcf; display: flex; flex-direction: column; justify-content: space-around; color: #1a1a1a; padding-top: 3px; }
.st1 { width: 192px; padding-left: 6px; }
.st2 { width: 192px; padding-left: 7px; }
.at-row { display: flex; gap: 9px; }
.st3 { width: 305px; align-items: flex-start; justify-content: center; padding: 0 0 0 129px; }
.mouse { width: 50px; height: 54px; display: block; margin-top: 2px; }
.st4 { width: 148px; flex-direction: row; padding-left: 6px; justify-content: flex-start; }
.pair { display: flex; flex-direction: column; justify-content: space-around; }
.pair:first-child { width: 59px; }
.st5 { width: 118px; padding-left: 5px; }
.st6 { width: 86px; padding-left: 9px; }
.taskbar { flex: 1; border-top: 1px solid #c4c4c4; box-sizing: border-box; display: flex; align-items: center; padding-bottom: 2px; background-image: linear-gradient(#dedede, #d8d8d8); }
.start { width: 30px; height: 30px; margin-left: 26px; flex: none; }
.start svg { width: 30px; height: 30px; display: block; }
.search { width: 141px; height: 38px; border-radius: 19px; background: #f7f7f7; margin-left: 19px; flex: none; display: flex; align-items: center; gap: 6px; padding-left: 26px; box-sizing: border-box; font-size: 14px; color: #333; }
.search svg { width: 18px; height: 18px; }
.apps { display: flex; margin-left: 5.500px; }
.app-ico { width: 55px; height: 48px; flex: none; position: relative; display: flex; align-items: center; justify-content: center; border-radius: 5px; box-sizing: border-box; }
.app-ico svg { width: 32px; height: 32px; overflow: visible; }
.app-ico.cur { background: #f3f3f3; width: 48px; margin: 0 3.500px; }
.badge { position: absolute; left: 26px; top: -1px; width: 20px; height: 20px; border-radius: 50%; background: #c42b1c; color: #fff; font-size: 12px; font-weight: 400; display: flex; align-items: center; justify-content: center; }
.pip { position: absolute; left: 50%; margin-left: -4px; bottom: -1px; width: 8px; height: 4px; border-radius: 2px; background: #707070; }
.cur .pip { width: 20px; margin-left: -10px; background: #0067c0; bottom: 1px; }
.tray { margin-left: auto; display: flex; align-items: center; height: 100%; padding-right: 16px; }
.tr { display: flex; align-items: center; justify-content: center; flex: none; }
.tr1, .tr2, .tr3 { width: 40px; }
.tr1 svg { width: 14px; height: 9px; }
.tr2 svg { width: 22px; height: 22px; }
.tr3 svg { width: 16px; height: 24px; }
.lang { width: 56px; margin-right: 5px; display: flex; flex-direction: column; align-items: center; font-size: 13.500px; line-height: 20px; color: #222; }
.tr4 { width: 28px; }
.tr4 svg { width: 21px; height: 16px; }
.tr5 { width: 28px; }
.tr5 svg { width: 19px; height: 17px; }
.tr6 { width: 36px; }
.tr6 svg { width: 21px; height: 18px; }
.clock { width: 90px; display: flex; flex-direction: column; align-items: flex-end; font-size: 13.500px; line-height: 20px; color: #222; }
.date { letter-spacing: .7px; }
.tr7 { width: 38px; }
.tr7 svg { width: 17px; height: 20px; }
</style>
